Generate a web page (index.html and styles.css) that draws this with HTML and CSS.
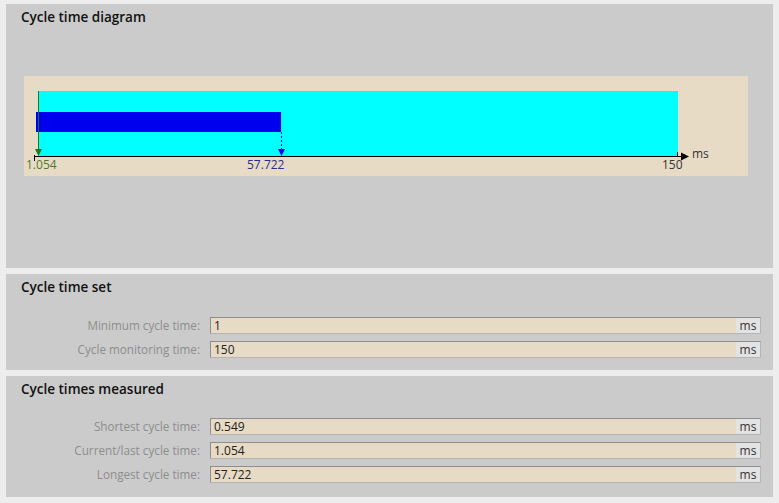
FILE: index.html
```html
<!DOCTYPE html>
<html lang="en">
<head>
  <meta charset="UTF-8">
  <title>Cycle time</title>
  <link rel="stylesheet" href="styles.css">
</head>
<body>
  <div class="page">
    <div class="panel diagram-panel">
      <h3>Cycle time diagram</h3>
      <div class="diagram">
        <svg width="724" height="100" viewBox="0 0 724 100">
          <rect x="14" y="15" width="640" height="65" fill="#00ffff"/>
          <rect x="12" y="36" width="245" height="20" fill="#0000ee"/>
          <line x1="10" y1="80.5" x2="660" y2="80.5" stroke="#000" stroke-width="1"/>
          <polygon points="657,76.5 665,80.5 657,84.5" fill="#000"/>
          <line x1="10.5" y1="79" x2="10.5" y2="85" stroke="#000"/>
          <line x1="653.5" y1="76" x2="653.5" y2="80" stroke="#000"/>
          <line x1="14.5" y1="15" x2="14.5" y2="78" stroke="#1b7a1b"/>
          <polygon points="11,73 18,73 14.5,80" fill="#1b7a1b"/>
          <line x1="257.5" y1="56" x2="257.5" y2="76" stroke="#0000ee" stroke-dasharray="2,2"/>
          <polygon points="254,73 261,73 257.5,80" fill="#0000ee"/>
          <text x="2" y="93" class="lbl-green">1.054</text>
          <text x="223" y="93" class="lbl-blue">57.722</text>
          <text x="638" y="93" class="lbl-dark">150</text>
          <text x="668" y="82" class="lbl-dark">ms</text>
        </svg>
      </div>
    </div>

    <div class="panel set-panel">
      <h3>Cycle time set</h3>
      <div class="fields">
        <div class="row">
          <label>Minimum cycle time:</label>
          <div class="field"><span class="value">1</span><span class="unit">ms</span></div>
        </div>
        <div class="row">
          <label>Cycle monitoring time:</label>
          <div class="field"><span class="value">150</span><span class="unit">ms</span></div>
        </div>
      </div>
    </div>

    <div class="panel measured-panel">
      <h3>Cycle times measured</h3>
      <div class="fields">
        <div class="row">
          <label>Shortest cycle time:</label>
          <div class="field"><span class="value">0.549</span><span class="unit">ms</span></div>
        </div>
        <div class="row">
          <label>Current/last cycle time:</label>
          <div class="field"><span class="value">1.054</span><span class="unit">ms</span></div>
        </div>
        <div class="row">
          <label>Longest cycle time:</label>
          <div class="field"><span class="value">57.722</span><span class="unit">ms</span></div>
        </div>
      </div>
    </div>
  </div>
</body>
</html>
```

FILE: styles.css
```css
body {
  margin: 0;
  background-color: #ededed;
  font-family: "Open Sans", Arial, sans-serif;
  font-size: 12px;
  color: #222;
}
.page {
  display: flex;
  flex-direction: column;
  gap: 6px;
  padding: 4px 6px 0 6px;
  width: 767px;
}
.panel {
  background: #cbcbcb;
  box-sizing: border-box;
}
h3 {
  margin: 0;
  padding: 5px 0 0 15px;
  font-size: 13.5px;
  font-weight: 600;
  color: #111;
  line-height: 16px;
}
.diagram-panel {
  height: 264px;
}
.diagram {
  margin: 51px 0 0 18px;
  width: 724px;
  height: 100px;
  background: #e8dbc6;
}
.diagram svg {
  display: block;
}
.diagram text {
  font-family: "Open Sans", Arial, sans-serif;
  font-size: 12px;
}
.lbl-green {
  fill: #4f7a2b;
}
.lbl-blue {
  fill: #2b2b8a;
}
.lbl-dark {
  fill: #333;
}
.set-panel {
  height: 96px;
}
.measured-panel {
  height: 121px;
}
.fields {
  display: flex;
  flex-direction: column;
  gap: 8px;
  margin-top: 22px;
}
.measured-panel .fields {
  margin-top: 21px;
}
.row {
  display: flex;
  align-items: center;
  height: 16px;
}
.row label {
  width: 194px;
  text-align: right;
  color: #8d8d8d;
  margin-right: 10px;
  font-size: 11.7px;
}
.field {
  display: flex;
  width: 551px;
  height: 17px;
  box-sizing: border-box;
  border: 1px solid #8e8e8e;
  border-right-color: #b5b5b5;
  border-bottom-color: #b5b5b5;
}
.value {
  flex: 1;
  background: #e8dbc6;
  padding-left: 3px;
  line-height: 15px;
}
.unit {
  width: 24px;
  background: #e3e3e3;
  line-height: 15px;
  text-align: center;
  color: #333;
}
```
